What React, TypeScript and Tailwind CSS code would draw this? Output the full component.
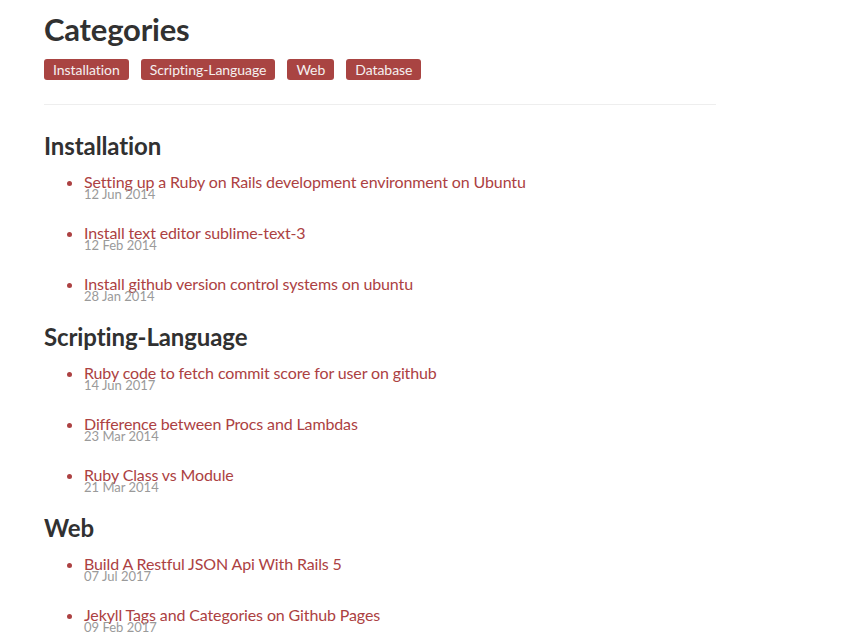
const tags = ['Installation', 'Scripting-Language', 'Web', 'Database'];

type Post = { title: string; date: string };

const sections: { name: string; posts: Post[] }[] = [
  {
    name: 'Installation',
    posts: [
      { title: 'Setting up a Ruby on Rails development environment on Ubuntu', date: '12 Jun 2014' },
      { title: 'Install text editor sublime-text-3', date: '12 Feb 2014' },
      { title: 'Install github version control systems on ubuntu', date: '28 Jan 2014' },
    ],
  },
  {
    name: 'Scripting-Language',
    posts: [
      { title: 'Ruby code to fetch commit score for user on github', date: '14 Jun 2017' },
      { title: 'Difference between Procs and Lambdas', date: '23 Mar 2014' },
      { title: 'Ruby Class vs Module', date: '21 Mar 2014' },
    ],
  },
  {
    name: 'Web',
    posts: [
      { title: 'Build A Restful JSON Api With Rails 5', date: '07 Jul 2017' },
      { title: 'Jekyll Tags and Categories on Github Pages', date: '09 Feb 2017' },
    ],
  },
];

export default function App() {
  return (
    <div className="min-h-screen bg-white font-['Lato','Liberation_Sans',sans-serif] text-[#515151]">
      <div className="ml-[44px] w-[672px] pt-[10px]">
        <h1 className="text-[31px] font-bold leading-[38px] tracking-[-0.2px] text-[#313131]">Categories</h1>

        <div className="mt-[11px] flex flex-wrap gap-3">
          {tags.map((tag) => (
            <a
              key={tag}
              href={`#${tag}`}
              className="rounded-[3px] bg-[#a94442] px-[9px] text-[14px] leading-[21px] tracking-[-0.05px] text-[#f5f0f0]"
            >
              {tag}
            </a>
          ))}
        </div>

        <hr className="mt-[24px] border-t border-[#eeeeee]" />

        <div className="pt-[26px]">
          {sections.map((section) => (
            <div key={section.name}>
              <h2 className="text-[24px] font-bold leading-[30px] tracking-[-0.1px] text-[#313131]">{section.name}</h2>
              <ul className="mt-3 mb-5 list-disc space-y-6 pl-10 marker:text-[#ac4142]">
                {section.posts.map((post) => (
                  <li key={post.title} className="text-[16px] leading-[18px] text-[#ac4142]">
                    <a href="#" className="block text-[16px] leading-[18px] tracking-[-0.13px] text-[#ac4142]">
                      {post.title}
                    </a>
                    <span className="-mt-[3px] block text-[13px] leading-[12px] text-[#9a9a9a]">{post.date}</span>
                  </li>
                ))}
              </ul>
            </div>
          ))}
        </div>
      </div>
    </div>
  );
}
